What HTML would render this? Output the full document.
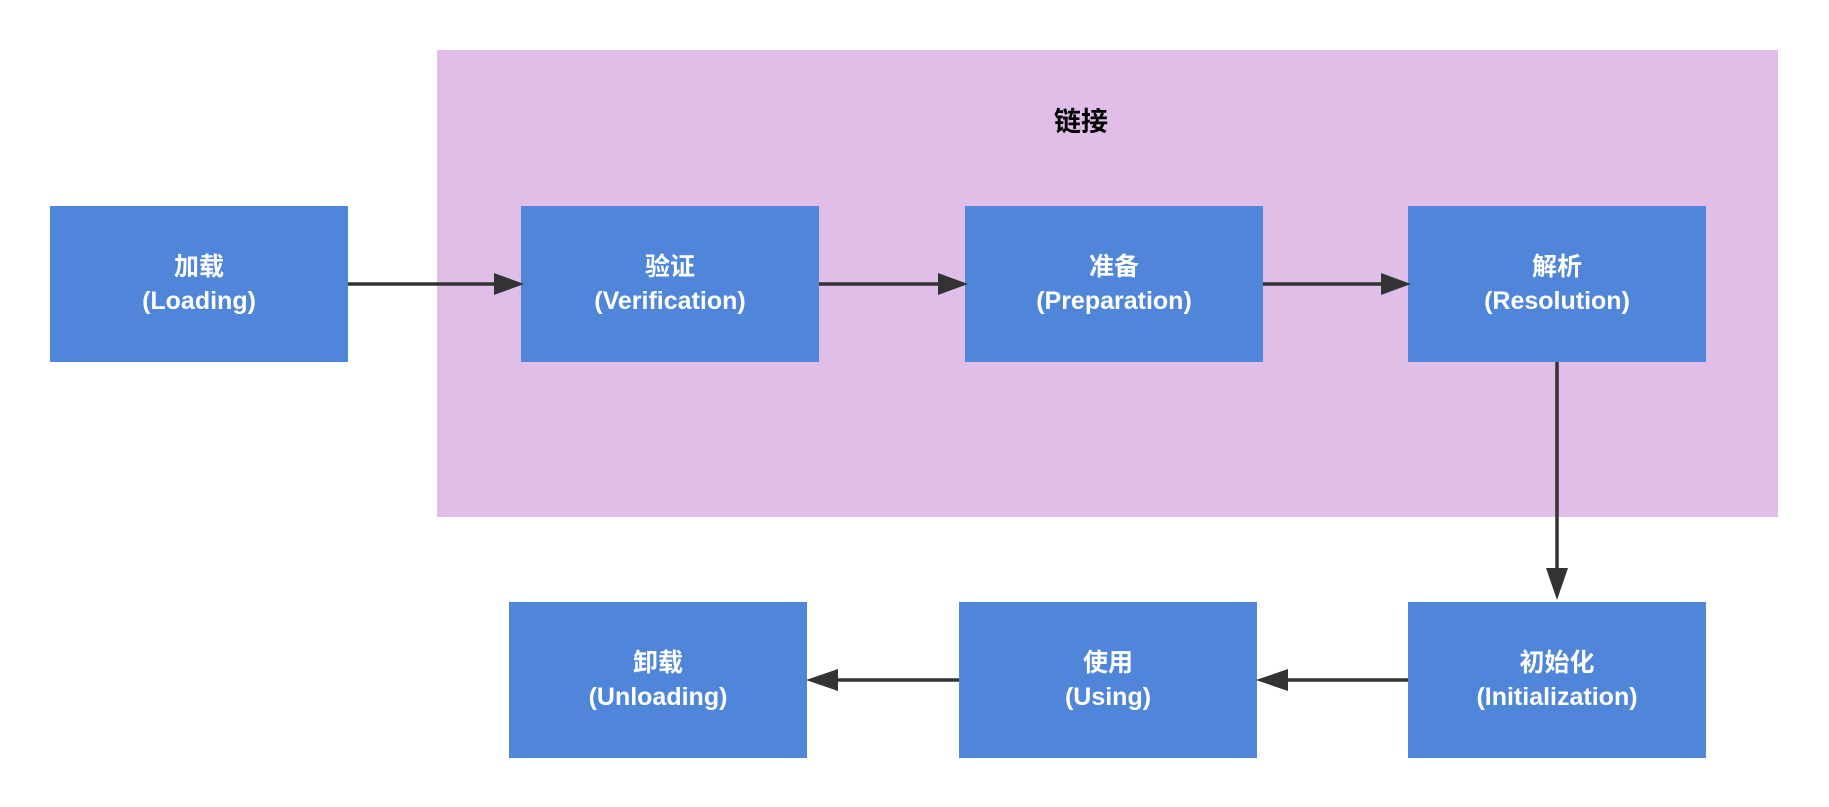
<!DOCTYPE html>
<html><head><meta charset="utf-8"><style>
body{margin:0;width:1829px;height:807px;background:#fff;position:relative;overflow:hidden;font-family:"Liberation Sans","Noto Sans CJK SC",sans-serif}
.p{position:absolute;left:437px;top:50px;width:1341px;height:467px;background:#e1bee7}
.t{position:absolute;left:1031px;top:100px;width:100px;text-align:center;font-weight:bold;font-size:27px;color:#000}
.b{position:absolute;width:298px;height:156px;background:#4f86da;color:#fff;font-weight:bold;font-size:25px;line-height:34px;display:flex;align-items:center;justify-content:center;text-align:center;flex-direction:column}
svg{position:absolute;left:0;top:0}
</style></head><body>
<div class="p"></div>
<div class="t">链接</div>
<div class="b" style="left:50px;top:206px">加载<br>(Loading)</div>
<div class="b" style="left:521px;top:206px">验证<br>(Verification)</div>
<div class="b" style="left:965px;top:206px">准备<br>(Preparation)</div>
<div class="b" style="left:1408px;top:206px">解析<br>(Resolution)</div>
<div class="b" style="left:509px;top:602px">卸载<br>(Unloading)</div>
<div class="b" style="left:959px;top:602px">使用<br>(Using)</div>
<div class="b" style="left:1408px;top:602px">初始化<br>(Initialization)</div>
<svg width="1829" height="807">
<g stroke="#333" stroke-width="3.5" fill="#333">
<line x1="348" y1="284" x2="500" y2="284"/><polygon points="494,273 524,284 494,295" stroke="none"/>
<line x1="819" y1="284" x2="944" y2="284"/><polygon points="938,273 968,284 938,295" stroke="none"/>
<line x1="1263" y1="284" x2="1387" y2="284"/><polygon points="1381,273 1411,284 1381,295" stroke="none"/>
<line x1="1557" y1="362" x2="1557" y2="575"/><polygon points="1546,568 1557,600 1568,568" stroke="none"/>
<line x1="1408" y1="680" x2="1282" y2="680"/><polygon points="1288,669 1256,680 1288,691" stroke="none"/>
<line x1="959" y1="680" x2="832" y2="680"/><polygon points="838,669 806,680 838,691" stroke="none"/>
</g></svg>
</body></html>
